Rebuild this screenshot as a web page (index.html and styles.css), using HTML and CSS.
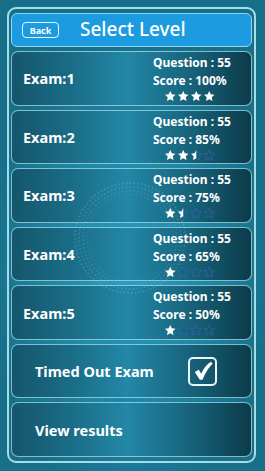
FILE: index.html
```html
<!DOCTYPE html>
<html>
<head>
<meta charset="utf-8">
<link rel="stylesheet" href="styles.css">
</head>
<body>
<svg width="0" height="0" class="defs">
  <defs>
    <polygon id="star" points="5,0 6.5,3.2 10,3.6 7.4,6 8.1,9.6 5,7.8 1.9,9.6 2.6,6 0,3.6 3.5,3.2"/>
  </defs>
</svg>
<div class="frame">
  <div class="header">
    <div class="back">Back</div>
    <div class="title">Select Level</div>
  </div>

  <div class="row exam">
    <div class="label">Exam:1</div>
    <div class="stats">
      <div class="line">Question : 55</div>
      <div class="line">Score : 100%</div>
      <div class="stars">
        <svg viewBox="0 0 10 10" class="s"><use href="#star" class="full"/></svg>
        <svg viewBox="0 0 10 10" class="s"><use href="#star" class="full"/></svg>
        <svg viewBox="0 0 10 10" class="s"><use href="#star" class="full"/></svg>
        <svg viewBox="0 0 10 10" class="s"><use href="#star" class="full"/></svg>
      </div>
    </div>
  </div>

  <div class="row exam">
    <div class="label">Exam:2</div>
    <div class="stats">
      <div class="line">Question : 55</div>
      <div class="line">Score : 85%</div>
      <div class="stars">
        <svg viewBox="0 0 10 10" class="s"><use href="#star" class="full"/></svg>
        <svg viewBox="0 0 10 10" class="s"><use href="#star" class="full"/></svg>
        <svg viewBox="0 0 10 10" class="s"><use href="#star" class="faint"/><clipPath id="h1"><rect x="0" y="0" width="5" height="10"/></clipPath><use href="#star" class="full" clip-path="url(#h1)"/></svg>
        <svg viewBox="0 0 10 10" class="s"><use href="#star" class="faint"/></svg>
      </div>
    </div>
  </div>

  <div class="row exam">
    <div class="label">Exam:3</div>
    <div class="stats">
      <div class="line">Question : 55</div>
      <div class="line">Score : 75%</div>
      <div class="stars">
        <svg viewBox="0 0 10 10" class="s"><use href="#star" class="full"/></svg>
        <svg viewBox="0 0 10 10" class="s"><use href="#star" class="faint"/><clipPath id="h2"><rect x="0" y="0" width="5" height="10"/></clipPath><use href="#star" class="full" clip-path="url(#h2)"/></svg>
        <svg viewBox="0 0 10 10" class="s"><use href="#star" class="faint"/></svg>
        <svg viewBox="0 0 10 10" class="s"><use href="#star" class="faint"/></svg>
      </div>
    </div>
  </div>

  <div class="row exam">
    <div class="label">Exam:4</div>
    <div class="stats">
      <div class="line">Question : 55</div>
      <div class="line">Score : 65%</div>
      <div class="stars">
        <svg viewBox="0 0 10 10" class="s"><use href="#star" class="full"/></svg>
        <svg viewBox="0 0 10 10" class="s"><use href="#star" class="faint"/></svg>
        <svg viewBox="0 0 10 10" class="s"><use href="#star" class="faint"/></svg>
        <svg viewBox="0 0 10 10" class="s"><use href="#star" class="faint"/></svg>
      </div>
    </div>
  </div>

  <div class="row exam">
    <div class="label">Exam:5</div>
    <div class="stats">
      <div class="line">Question : 55</div>
      <div class="line">Score : 50%</div>
      <div class="stars">
        <svg viewBox="0 0 10 10" class="s"><use href="#star" class="full"/></svg>
        <svg viewBox="0 0 10 10" class="s"><use href="#star" class="faint"/></svg>
        <svg viewBox="0 0 10 10" class="s"><use href="#star" class="faint"/></svg>
        <svg viewBox="0 0 10 10" class="s"><use href="#star" class="faint"/></svg>
      </div>
    </div>
  </div>

  <div class="row option">
    <div class="label2">Timed Out Exam</div>
    <div class="check">
      <svg viewBox="0 0 24 24" width="22" height="22"><path d="M3 13 L7.5 10.5 L10 15 C12.5 9.5 15.5 5.5 20.5 2 L22.5 4 C17.5 9 14.5 14 11.5 21.5 L8.5 21.5 Z" fill="#fff"/></svg>
    </div>
  </div>

  <div class="row option">
    <div class="label2">View results</div>
  </div>
</div>
<svg class="deco" width="120" height="120" viewBox="0 0 120 120">
  <circle cx="60" cy="60" r="55" fill="none" stroke="rgba(170,220,240,0.2)" stroke-width="2" stroke-dasharray="1.6 2.2"/>
  <circle cx="60" cy="60" r="51" fill="none" stroke="rgba(170,220,240,0.17)" stroke-width="2" stroke-dasharray="1.6 2.2"/>
  <circle cx="60" cy="60" r="47" fill="none" stroke="rgba(170,220,240,0.14)" stroke-width="2" stroke-dasharray="1.6 2.2"/>
  <circle cx="60" cy="60" r="43" fill="none" stroke="rgba(170,220,240,0.09)" stroke-width="2" stroke-dasharray="1.6 2.2"/>
</svg>
</body>
</html>
```

FILE: styles.css
```css
html, body {
  margin: 0;
  padding: 0;
}
body {
  width: 265px;
  height: 471px;
  overflow: hidden;
  position: relative;
  font-family: "Noto Sans", "DejaVu Sans", sans-serif;
  color: #fff;
  background: radial-gradient(ellipse 140px 240px at 130px 270px, #2a9ec2 0%, #1f87a6 55%, #176f8a 100%);
}
.defs {
  position: absolute;
}
.deco {
  position: absolute;
  left: 70px;
  top: 178px;
  pointer-events: none;
}
.frame {
  position: relative;
  margin: 7px 9px 8px 7px;
  height: 456px;
  box-sizing: border-box;
  border: 2px solid #a6dce6;
  border-radius: 9px;
  padding: 4px 2px;
  display: flex;
  flex-direction: column;
  gap: 4px;
}
.header {
  height: 34px;
  flex: none;
  box-sizing: border-box;
  background: #1c9be0;
  border: 1px solid #8fd6f3;
  border-radius: 6px;
  display: flex;
  align-items: center;
  padding-left: 10px;
}
.back {
  width: 37px;
  height: 16px;
  box-sizing: border-box;
  border: 1.5px solid #e6f6ff;
  border-radius: 4px;
  font-size: 9px;
  font-weight: 700;
  display: flex;
  align-items: center;
  justify-content: center;
  line-height: 1;
}
.title {
  margin-left: 21px;
  font-size: 19px;
  font-weight: 500;
  line-height: 1;
  padding-bottom: 1px;
}
.row {
  flex: 1;
  box-sizing: border-box;
  border: 1px solid rgba(160, 215, 228, 0.8);
  border-radius: 7px;
  background: linear-gradient(90deg, #14566b 0%, #1a6d87 25%, #2387a7 48%, #17627a 75%, #0c3b4a 100%);
  display: flex;
  align-items: center;
}
.exam {
  display: grid;
  grid-template-columns: 1fr 98px;
  align-items: stretch;
}
.label {
  font-size: 14.5px;
  font-weight: 700;
  padding-left: 11px;
  display: flex;
  align-items: center;
}
.stats {
  padding-top: 2px;
  font-size: 12px;
  font-weight: 700;
}
.line {
  height: 18px;
  line-height: 18px;
}
.stars {
  display: flex;
  gap: 2.5px;
  margin-top: 1px;
  padding-left: 12px;
  height: 10.5px;
}
.s {
  width: 10.5px;
  height: 10.5px;
  overflow: visible;
}
.full {
  fill: #ffffff;
}
.faint {
  fill: rgba(30, 80, 150, 0.22);
  stroke: rgba(60, 110, 185, 0.6);
  stroke-width: 0.8;
}
.option {
  justify-content: space-between;
  padding: 0 34px 0 23px;
}
.label2 {
  font-size: 14.5px;
  font-weight: 700;
}
.check {
  width: 29px;
  height: 29px;
  box-sizing: border-box;
  border: 2px solid #e8f6fa;
  border-radius: 5px;
  display: flex;
  align-items: center;
  justify-content: center;
}
```
